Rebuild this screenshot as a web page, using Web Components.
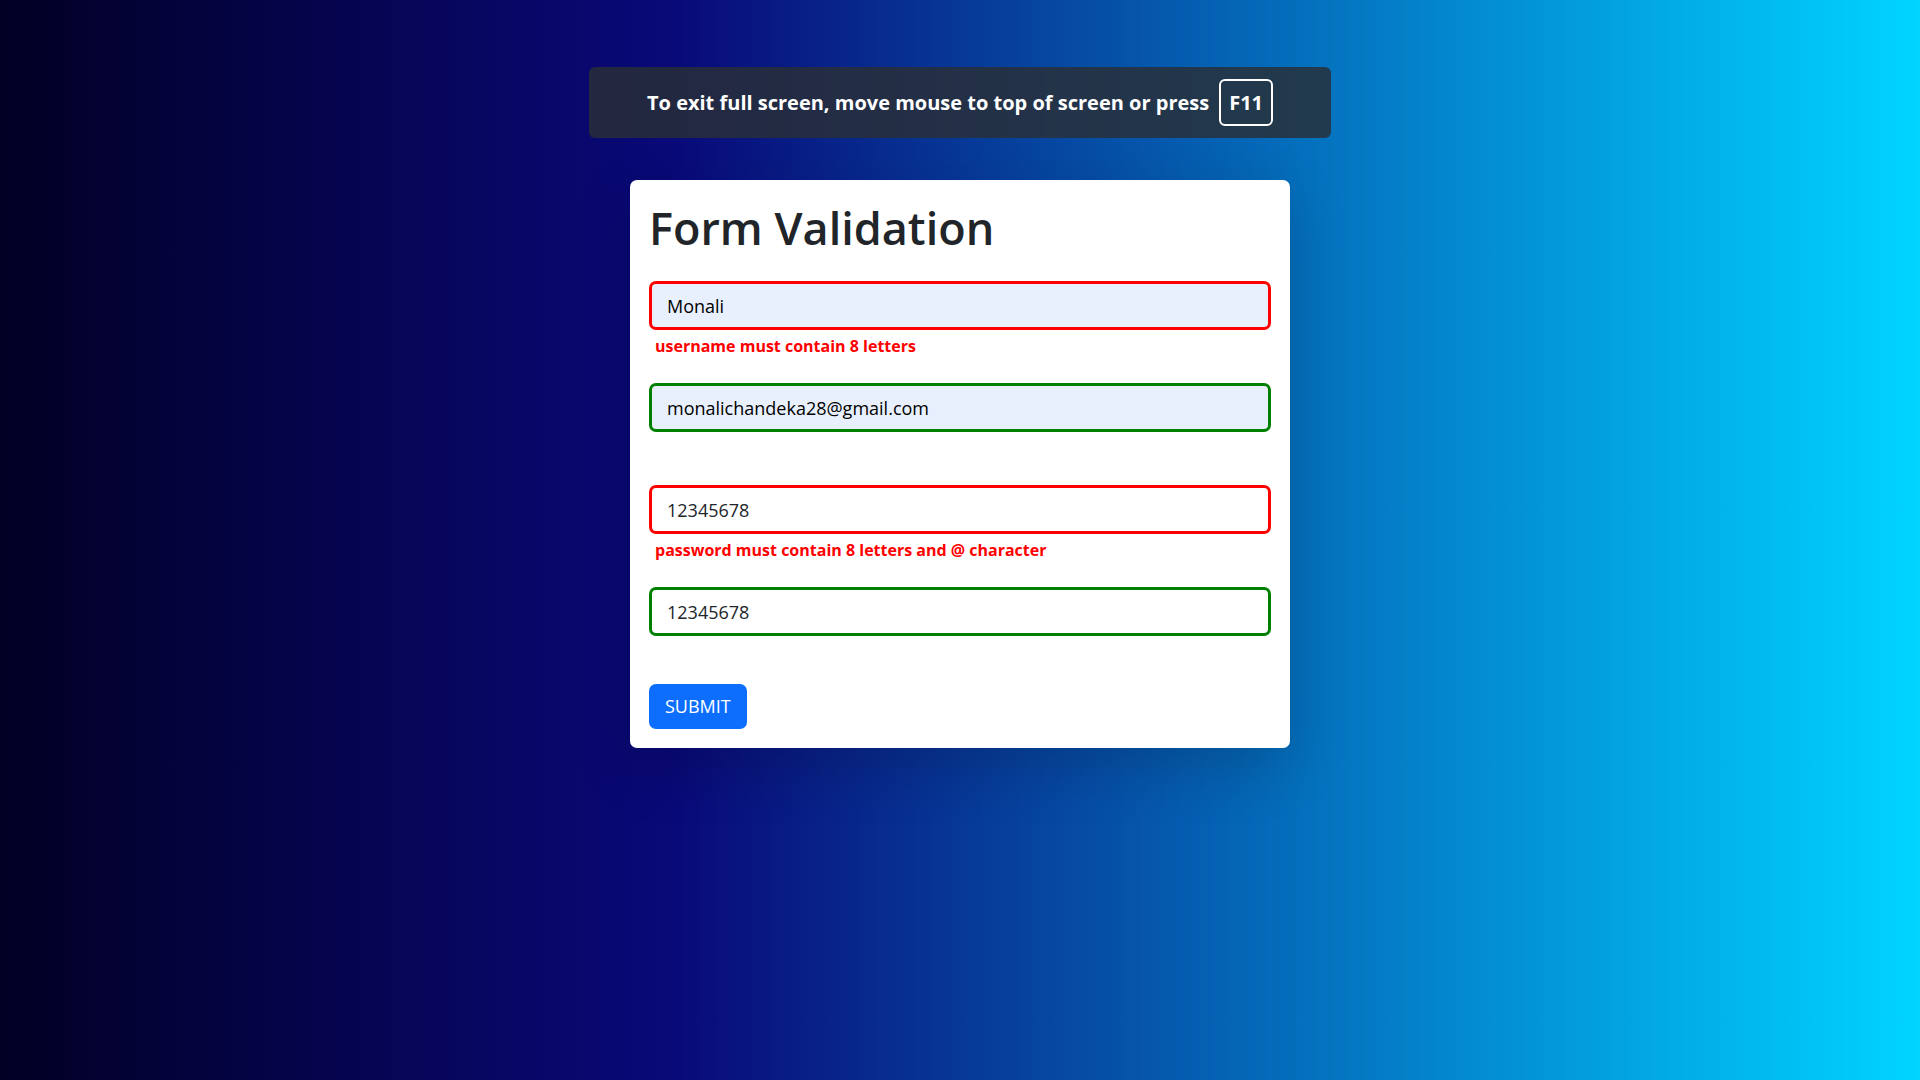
<!DOCTYPE html>
<html lang="en">
<head>
<meta charset="utf-8">
<meta name="viewport" content="width=device-width, initial-scale=1">
<title>Form Validation</title>
<style>
  body { margin: 0; font-family: "Open Sans", "Noto Sans", sans-serif; }
</style>
</head>
<body>
<validation-page>
  <screen-notice slot="notice" key-name="F11">To exit full screen, move mouse to top of screen or press</screen-notice>
  <form-card heading="Form Validation">
    <form-field label="Username" type="text" value="Monali" state="error" autofilled message="username must contain 8 letters"></form-field>
    <form-field label="Email" type="email" value="monalichandeka28@gmail.com" state="success" autofilled></form-field>
    <form-field label="Password" type="text" value="12345678" state="error" message="password must contain 8 letters and @ character"></form-field>
    <form-field label="Confirm password" type="text" value="12345678" state="success"></form-field>
    <submit-button slot="action">SUBMIT</submit-button>
  </form-card>
</validation-page>

<script>
class ValidationPage extends HTMLElement {
  connectedCallback() {
    this.attachShadow({ mode: "open" }).innerHTML = `
      <style>
        :host {
          display: flex; flex-direction: column; align-items: center; gap: 42px;
          box-sizing: border-box; min-height: 100vh; padding: 67px 16px 48px;
          background: linear-gradient(90deg, rgb(2,0,36) 0%, rgb(9,9,121) 35%, rgb(0,212,255) 100%);
        }
        main { width: 100%; max-width: 660px; }
        ::slotted(screen-notice) { position: relative; z-index: 1; }
      </style>
      <slot name="notice"></slot>
      <main><slot></slot></main>`;
  }
}

class ScreenNotice extends HTMLElement {
  connectedCallback() {
    this.attachShadow({ mode: "open" }).innerHTML = `
      <style>
        :host {
          display: flex; align-items: center; gap: 10px;
          box-sizing: border-box; padding: 12px 58px; border-radius: 6px;
          background: rgba(41,47,54,.83); color: #fff;
          font-size: 20px; line-height: 27px; font-weight: 700;
        }
        kbd { font: inherit; padding: 8px; border: 2px solid #fff; border-radius: 6px; }
      </style>
      <span><slot></slot></span><kbd></kbd>`;
    this.shadowRoot.querySelector("kbd").textContent = this.getAttribute("key-name");
  }
}

class FormCard extends HTMLElement {
  connectedCallback() {
    this.attachShadow({ mode: "open" }).innerHTML = `
      <style>
        :host {
          display: block; padding: 19px; border-radius: 7px; background: #fff; color: #212529;
          box-shadow: 0 19px 58px rgba(0,0,0,.176);
        }
        h1 { margin: 0 0 24px; font-size: 45px; line-height: 58px; font-weight: 600; }
        form { display: flex; flex-direction: column; gap: 19px; align-items: stretch; }
        .fields { display: flex; flex-direction: column; gap: 24px; }
      </style>
      <h1></h1>
      <form novalidate>
        <div class="fields"><slot></slot></div>
        <div><slot name="action"></slot></div>
      </form>`;
    this.shadowRoot.querySelector("h1").textContent = this.getAttribute("heading");
  }
}

class FormField extends HTMLElement {
  connectedCallback() {
    this.attachShadow({ mode: "open" }).innerHTML = `
      <style>
        :host { display: flex; flex-direction: column; --edge: green; }
        :host([state="error"]) { --edge: red; }
        input {
          box-sizing: border-box; width: 100%; height: 49px; margin: 0; padding: 7px 15px;
          border: 3px solid var(--edge); border-radius: 7px; outline: none;
          background: #fff; color: #212529;
          font-family: inherit; font-size: 18px; line-height: 29px;
        }
        :host([autofilled]) input { background: #e8f0fe; color: #000; }
        small {
          box-sizing: border-box; height: 29px; padding: 4px 6px 0;
          color: red; font-size: 16px; line-height: 25px; font-weight: 700;
        }
      </style>
      <input id="control" aria-describedby="message">
      <small id="message"></small>`;
    const input = this.shadowRoot.querySelector("input");
    input.type = this.getAttribute("type");
    input.value = this.getAttribute("value");
    input.setAttribute("aria-label", this.getAttribute("label"));
    input.setAttribute("aria-invalid", String(this.getAttribute("state") === "error"));
    this.shadowRoot.querySelector("small").textContent = this.getAttribute("message") || "";
  }
}

class SubmitButton extends HTMLElement {
  connectedCallback() {
    this.attachShadow({ mode: "open" }).innerHTML = `
      <style>
        :host { display: flex; }
        button {
          padding: 8px 16px; border: 0; border-radius: 7px;
          background: #0d6efd; color: #fff; cursor: pointer;
          font-family: inherit; font-size: 18px; line-height: 29px;
        }
      </style>
      <button type="button"><slot></slot></button>`;
  }
}

customElements.define("validation-page", ValidationPage);
customElements.define("screen-notice", ScreenNotice);
customElements.define("form-card", FormCard);
customElements.define("form-field", FormField);
customElements.define("submit-button", SubmitButton);
</script>
</body>
</html>
